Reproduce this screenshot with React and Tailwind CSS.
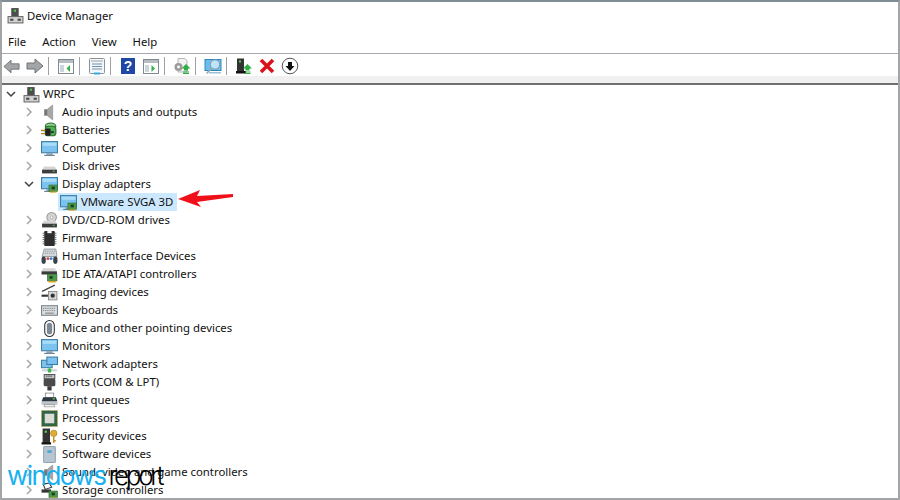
import React from 'react';

// shared bits of the little device icons
const Card = () => (
  <g>
    <rect x="7.5" y="8.5" width="8" height="6" fill="#4c9a4a" stroke="#2f6b33" strokeWidth="0.6" />
    <rect x="10" y="10" width="3" height="2.5" fill="#1d3d24" />
    <rect x="8.5" y="14.5" width="6" height="1.2" fill="#d9a521" />
  </g>
);

const Screen = ({ card }) => (
  <g>
    <rect x="0.5" y="1.5" width="15" height="10.5" fill="#7cc4ef" stroke="#3d7ea8" />
    <rect x="1.5" y="2.5" width="13" height="3" fill="#a9dcf7" />
    <rect x="5" y="12.5" width="6" height="1.5" fill="#8a9aa6" />
    <rect x="3" y="14" width="10" height="1" fill="#5f7f96" />
    {card && <Card />}
  </g>
);

const Speaker = () => (
  <g>
    <rect x="3" y="5" width="3" height="6" fill="#777" />
    <path d="M6 5 L11 1 V15 L6 11 Z" fill="#a8a8a8" stroke="#808080" strokeWidth="0.5" />
  </g>
);

const Drive = () => (
  <g>
    <path d="M3 8 H13 L15 11 H1 Z" fill="#d5d5d5" />
    <rect x="1" y="11" width="14" height="3.5" fill="#3c3c3c" />
    <rect x="11" y="12" width="2" height="1" fill="#59c25a" />
  </g>
);

const Computer = () => (
  <g>
    <rect x="4" y="1" width="7" height="9" fill="#4d4d4d" />
    <rect x="6.5" y="2.5" width="2" height="2" fill="#53c653" />
    <rect x="1" y="9" width="14" height="6" fill="#d2d2d2" stroke="#6b6b6b" />
    <rect x="3" y="11" width="3" height="2" fill="#4d4d4d" />
    <rect x="10" y="11" width="3" height="2" fill="#4d4d4d" />
  </g>
);

const icons = {
  computer: <Computer />,
  audio: <Speaker />,
  battery: (
    <g>
      <ellipse cx="9" cy="4" rx="5" ry="3" fill="#8fd08a" stroke="#2c6a35" />
      <rect x="4" y="4" width="10" height="9" rx="3" fill="#4caf50" stroke="#2c6a35" />
      <path d="M0 8 H5 M0 11 H5" stroke="#b98b1d" strokeWidth="1.2" />
      <rect x="4" y="6" width="5" height="7" rx="1" fill="#222" />
      <path d="M9 9.5 H12" stroke="#222" strokeWidth="1.5" />
    </g>
  ),
  monitor: <Screen />,
  disk: <Drive />,
  display: <Screen card />,
  dvd: (
    <g>
      <circle cx="10" cy="5" r="4.5" fill="#d4d4d4" stroke="#9a9a9a" />
      <circle cx="10" cy="5" r="1.2" fill="#fff" stroke="#888" strokeWidth="0.5" />
      <Drive />
    </g>
  ),
  firmware: (
    <g>
      <rect x="3" y="1" width="10" height="14" rx="1" fill="#2f2f2f" />
      <rect x="6" y="1" width="4" height="2" fill="#fff" />
      <path d="M1.5 3 H3 M1.5 5 H3 M1.5 7 H3 M1.5 9 H3 M1.5 11 H3 M1.5 13 H3 M13 3 H14.5 M13 5 H14.5 M13 7 H14.5 M13 9 H14.5 M13 11 H14.5 M13 13 H14.5" stroke="#777" />
    </g>
  ),
  hid: (
    <g>
      <path d="M3 1 H14 L15 8 H1 Z" fill="#d4d8db" stroke="#7d858b" strokeWidth="0.7" />
      <path d="M4 3 H13 M3.5 5 H13.5" stroke="#8d959b" strokeDasharray="1 1" />
      <rect x="0.5" y="8" width="4" height="7" rx="2" fill="#39424a" />
      <rect x="11.5" y="8" width="4" height="7" rx="2" fill="#39424a" />
      <circle cx="6.5" cy="10" r="1.4" fill="#d9453c" />
      <circle cx="9.5" cy="10" r="1.4" fill="#3d7fd1" />
    </g>
  ),
  ide: (
    <g>
      <path d="M2 2 H13 L15 5 H0.5 Z" fill="#d5d5d5" />
      <rect x="0.5" y="5" width="14.5" height="3" fill="#3c3c3c" />
      <rect x="6" y="8" width="9" height="6" fill="#4c9a4a" stroke="#2f6b33" strokeWidth="0.6" />
      <rect x="8" y="9.5" width="3" height="2.5" fill="#1d3d24" />
      <rect x="7" y="14" width="7" height="1.5" fill="#d9a521" />
    </g>
  ),
  imaging: (
    <g>
      <path d="M1 7 L13 1" stroke="#444" strokeWidth="1.2" />
      <rect x="0.5" y="10" width="6" height="2" fill="#333" />
      <rect x="7" y="7" width="8" height="8" fill="#d7d7d7" stroke="#777" strokeWidth="0.7" />
      <circle cx="11" cy="11" r="2" fill="#333" />
    </g>
  ),
  keyboard: (
    <g>
      <rect x="0.5" y="3.5" width="15" height="9" fill="#d9dcde" stroke="#7b8186" />
      <path d="M2 6 H14 M2 8 H14" stroke="#7b8186" strokeDasharray="1 1" />
      <path d="M4 10.5 H12" stroke="#7b8186" />
    </g>
  ),
  mouse: (
    <g>
      <rect x="3.5" y="0.5" width="9" height="15" rx="4.5" fill="#fff" stroke="#2b2f33" />
      <rect x="5.5" y="2.5" width="5" height="11" rx="2.5" fill="#7d8a96" />
    </g>
  ),
  network: (
    <g>
      <rect x="0.5" y="4" width="10" height="7" fill="#7cc4ef" stroke="#3d7ea8" />
      <rect x="5.5" y="1" width="10" height="7" fill="#7cc4ef" stroke="#3d7ea8" />
      <rect x="1" y="12.5" width="14" height="2" fill="#cfd6da" />
      <path d="M8 11 L10.5 13.5 H5.5 Z" fill="#3fb549" />
      <rect x="6.5" y="13" width="3" height="2.5" fill="#3fb549" />
    </g>
  ),
  ports: (
    <g>
      <rect x="3" y="0.5" width="10" height="4" fill="#bfc3c6" stroke="#555" />
      <path d="M5 2 H11" stroke="#333" strokeDasharray="1 1" />
      <rect x="2.5" y="4.5" width="11" height="7" rx="1.5" fill="#4a4a4a" />
      <rect x="6" y="11.5" width="4" height="4" fill="#3a3a3a" />
    </g>
  ),
  print: (
    <g>
      <rect x="4" y="1" width="8" height="4" fill="#fff" stroke="#666" strokeWidth="0.6" />
      <path d="M2 5 H14 L15.5 9 H0.5 Z" fill="#2f3a3e" />
      <rect x="0.5" y="9" width="15" height="3" fill="#bcc4c8" />
      <rect x="3" y="12" width="10" height="2" fill="#f4f4f4" stroke="#777" strokeWidth="0.5" />
      <rect x="11" y="6" width="2" height="1" fill="#6fdc6f" />
    </g>
  ),
  cpu: (
    <g>
      <rect x="0.5" y="0.5" width="15" height="15" fill="#2f6549" stroke="#c3a648" strokeDasharray="1 1" />
      <rect x="1.5" y="1.5" width="13" height="13" fill="#2f6549" />
      <rect x="3.5" y="3.5" width="9" height="9" fill="#dcdcd4" />
    </g>
  ),
  security: (
    <g>
      <rect x="1.5" y="0.5" width="7" height="14" fill="#333" />
      <rect x="3.5" y="2.5" width="2" height="2" fill="#5fd65f" />
      <rect x="0.5" y="13.5" width="9" height="2" fill="#111" />
      <circle cx="12" cy="5" r="3" fill="#e3ac33" stroke="#a87817" strokeWidth="0.6" />
      <path d="M12 8 V14 M12 12 H14" stroke="#c98f1f" strokeWidth="1.4" />
    </g>
  ),
  software: (
    <g>
      <rect x="2.5" y="0.5" width="11" height="15" rx="1" fill="#b7c5d0" stroke="#93a3af" />
      <rect x="6" y="4" width="4" height="2.5" fill="#4aa6d6" />
    </g>
  ),
  storage: (
    <g>
      <path d="M2 2 L8 1 L10 5 L4 7 Z" fill="#fff" stroke="#333" />
      <rect x="0.5" y="7" width="9" height="3" fill="#333" />
      <Card />
    </g>
  ),
};

const rows = [
  ['Audio inputs and outputs', 'audio'],
  ['Batteries', 'battery'],
  ['Computer', 'monitor'],
  ['Disk drives', 'disk'],
  ['Display adapters', 'display', true],
  ['DVD/CD-ROM drives', 'dvd'],
  ['Firmware', 'firmware'],
  ['Human Interface Devices', 'hid'],
  ['IDE ATA/ATAPI controllers', 'ide'],
  ['Imaging devices', 'imaging'],
  ['Keyboards', 'keyboard'],
  ['Mice and other pointing devices', 'mouse'],
  ['Monitors', 'monitor'],
  ['Network adapters', 'network'],
  ['Ports (COM & LPT)', 'ports'],
  ['Print queues', 'print'],
  ['Processors', 'cpu'],
  ['Security devices', 'security'],
  ['Software devices', 'software'],
  ['Sound, video and game controllers', 'audio'],
  ['Storage controllers', 'storage'],
];

const Icon = ({ name }) => (
  <svg width="17" height="17" viewBox="0 0 16 16" className="shrink-0">
    {icons[name]}
  </svg>
);

const Chevron = ({ open }) => (
  <svg width="10" height="10" viewBox="0 0 10 10" className="shrink-0">
    <path
      d={open ? 'M1 3 L5 7 L9 3' : 'M3 1 L7 5 L3 9'}
      fill="none"
      stroke={open ? '#404040' : '#a6a6a6'}
      strokeWidth="1.5"
    />
  </svg>
);

const Sep = () => <div className="w-px h-[18px] bg-[#a0a0a0] ml-[2px] mr-[5px] shrink-0" />;

const Tool = ({ children }) => (
  <div className="w-[23px] h-[18px] flex items-center justify-center shrink-0">
    <svg width="18" height="18" viewBox="0 0 18 18">
      {children}
    </svg>
  </div>
);

const Pane = ({ arrow }) => (
  <g>
    <rect x="1.5" y="2.5" width="15" height="14" fill="#fff" stroke="#808a90" />
    <rect x="2" y="3" width="14" height="3" fill="#b6bec3" />
    <rect x="3" y="8" width="4" height="7" fill="#ccd5db" />
    <path d={arrow} fill="#35b24a" />
  </g>
);

const UpArrow = ({ x, y }) => (
  <path d={`M${x} ${y} l4.5 4.5 h-2.5 v2 h-4 v-2 h-2.5 Z`} fill="#2fae44" />
);

function App() {
  return (
    <div className="w-[900px] h-[500px] relative overflow-hidden bg-white border-2 border-[#a3a5a7] border-t-[#7e8d96] text-[11.35px] text-[#111] font-['Noto_Sans','Open_Sans',sans-serif] flex flex-col">
      {/* title bar */}
      <div className="h-[29px] flex items-center pl-[5px] pb-[2px] gap-[3px] shrink-0">
        <svg width="17" height="17" viewBox="0 0 16 16"><Computer /></svg>
        <span>Device Manager</span>
      </div>

      {/* menu */}
      <div className="h-[23px] flex items-center pl-[6px] gap-[16px] border-b border-[#a9a9b3] shrink-0">
        <span>File</span>
        <span>Action</span>
        <span>View</span>
        <span>Help</span>
      </div>

      {/* toolbar */}
      <div className="h-[22px] flex items-center pt-[2px] shrink-0">
        <div className="w-[21px] h-[18px] flex items-center pl-[1px] shrink-0">
          <svg width="17" height="15" viewBox="0 0 19 16">
            <path d="M1 8 L9 1 V5 H18 V11 H9 V15 Z" fill="#a2a6a9" stroke="#6f7376" />
          </svg>
        </div>
        <Tool>
          <path d="M17 9 L9 2 V6 H1 V12 H9 V16 Z" fill="#a2a6a9" stroke="#6f7376" />
        </Tool>
        <Sep />
        <Tool><Pane arrow="M9.5 11.5 L13 8 V15 Z" /></Tool>
        <Sep />
        <Tool>
          <rect x="1.5" y="1.5" width="15" height="15" rx="1" fill="#f4f7f9" stroke="#8b9297" />
          <rect x="3" y="3" width="12" height="2" fill="#c5cdd2" />
          <path d="M4 7 H14 M4 9.5 H14 M4 12 H14" stroke="#6f8fa8" />
          <rect x="6" y="15.5" width="6" height="2" fill="#35a9e0" />
        </Tool>
        <Sep />
        <Tool>
          <rect x="2" y="1" width="14" height="16" fill="#1f47a8" />
          <text x="9" y="14" textAnchor="middle" fontSize="14" fontWeight="700" fill="#fff" fontFamily="Liberation Sans">?</text>
        </Tool>
        <Tool><Pane arrow="M9.5 8 L13 11.5 L9.5 15 Z" /></Tool>
        <Sep />
        <Tool>
          <path d="M5 1.5 H12 L14 4 V15 H5 Z" fill="#f2f2f2" stroke="#b5b5b5" />
          <circle cx="5.5" cy="10" r="4" fill="#9b9b9b" />
          <circle cx="5.5" cy="10" r="1.4" fill="#fff" />
          <UpArrow x={13} y={7} />
          <path d="M10 15 H16 M10 16.5 H16" stroke="#2fae44" />
        </Tool>
        <Sep />
        <Tool>
          <rect x="1" y="2.5" width="16" height="11" fill="#6cbcec" stroke="#2e88c0" />
          <rect x="5" y="15" width="12" height="1.5" fill="#9cc1da" />
          <circle cx="11" cy="7.5" r="4.7" fill="#bfe3f6" stroke="#7c97a8" />
          <path d="M8 11 L2.5 16.5" stroke="#9aa8b0" strokeWidth="1.6" />
        </Tool>
        <Sep />
        <Tool>
          <rect x="2" y="1.5" width="7" height="13" fill="#333" />
          <rect x="4" y="3.5" width="2" height="2" fill="#4fd05f" />
          <rect x="1" y="14" width="10" height="2.5" fill="#111" />
          <UpArrow x={12.5} y={7} />
          <path d="M10 15 H15.5 M10 16.5 H15.5" stroke="#2fae44" />
        </Tool>
        <Tool>
          <path d="M3 3 L15 15 M15 3 L3 15" stroke="#d9141a" strokeWidth="3.6" />
        </Tool>
        <Tool>
          <circle cx="9" cy="9" r="7.8" fill="#fff" stroke="#555" />
          <path d="M9 14 L4.5 9 H7 V5 H11 V9 H13.5 Z" fill="#111" />
        </Tool>
      </div>

      {/* strip under toolbar */}
      <div className="h-[9px] bg-[#f0f0f0] border-b-2 border-[#6f6f6f] shrink-0" />

      {/* device tree */}
      <div className="flex flex-col leading-[18px]">
        <div className="h-[18px] flex items-center pl-[4px]">
          <Chevron open />
          <span className="w-[7px]" />
          <Icon name="computer" />
          <span className="ml-[3px]">WRPC</span>
        </div>
        {rows.map(([label, icon, open]) => (
          <React.Fragment key={label}>
            <div className="h-[18px] flex items-center pl-[22px] whitespace-nowrap">
              <Chevron open={open} />
              <span className="w-[7px]" />
              <Icon name={icon} />
              <span className="ml-[4px]">{label}</span>
            </div>
            {open && (
              <div className="h-[18px] flex items-center ml-[56px]">
                <div className="h-[18px] flex items-center bg-[#cce8ff] pl-[2px] pr-[4px]">
                  <Icon name="display" />
                  <span className="ml-[4px]">VMware SVGA 3D</span>
                </div>
              </div>
            )}
          </React.Fragment>
        ))}
      </div>

      {/* red callout arrow */}
      <svg width="60" height="22" viewBox="0 0 60 22" className="absolute left-[174px] top-[185px]">
        <path d="M2 12 L24 3 L21 9 L57 7 V10 L21 15 L25 20 Z" fill="#f0101a" />
      </svg>

      {/* watermark */}
      <div className="absolute left-[5px] top-[461px] flex items-baseline leading-none font-['Inter',sans-serif]">
        <span className="text-[#17b0f0] text-[26px] tracking-[-1.5px]">windows</span>
        <span className="text-black text-[26px] font-light tracking-[-3.3px] ml-[3px]">report</span>
      </div>
    </div>
  );
}

export default App;
